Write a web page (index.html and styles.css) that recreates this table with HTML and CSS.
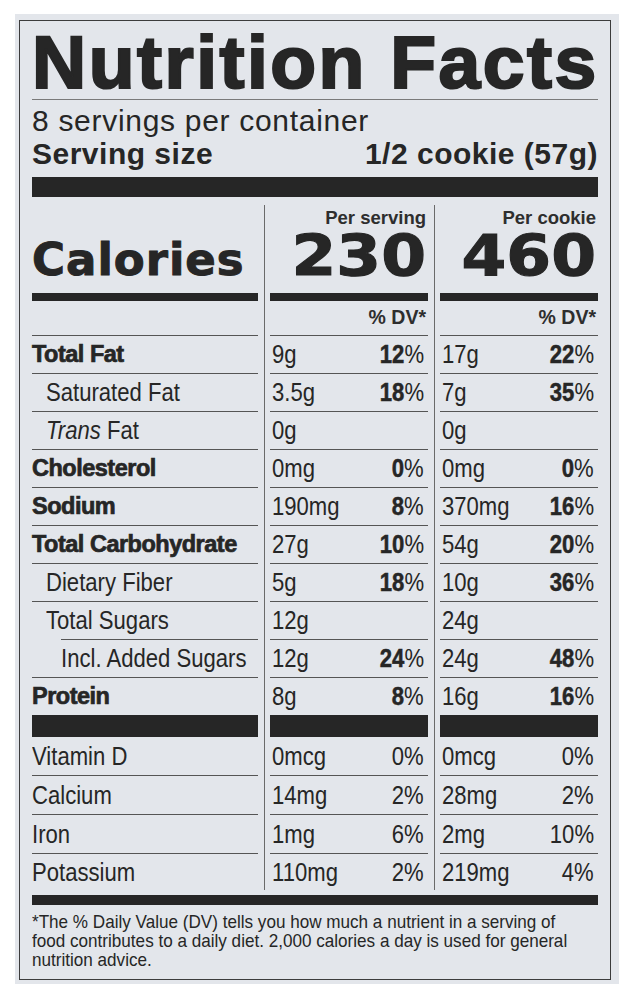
FILE: index.html
```html
<!DOCTYPE html>
<html lang="en">
<head>
<meta charset="utf-8">
<title>Nutrition Facts</title>
<link rel="stylesheet" href="styles.css">
</head>
<body>
<div class="label">
  <div class="panel">
    <h1 class="title">Nutrition Facts</h1>
    <div class="servings">8 servings per container</div>
    <div class="size"><span>Serving size</span><span>1/2 cookie (57g)</span></div>
    <div class="bar-thick"></div>

    <div class="grid">
      <div class="vline v1"></div>
      <div class="vline v2"></div>

      <div class="c1"></div>
      <div class="c2 head">Per serving</div>
      <div class="c3 head">Per cookie</div>

      <div class="c1 cal-label calbar">Calories</div>
      <div class="c2 cal-num calbar"><span class="num">230</span></div>
      <div class="c3 cal-num calbar"><span class="num">460</span></div>

      <div class="c1 rule"></div>
      <div class="c2 dv rule">% DV*</div>
      <div class="c3 dv rule">% DV*</div>

      <div class="c1 lab bold rule">Total Fat</div>
      <div class="c2 val rule"><span class="cx">9g</span><span class="cxr"><b>12</b>%</span></div>
      <div class="c3 val rule"><span class="cx">17g</span><span class="cxr"><b>22</b>%</span></div>

      <div class="c1 lab in1 rule"><span class="cx">Saturated Fat</span></div>
      <div class="c2 val rule"><span class="cx">3.5g</span><span class="cxr"><b>18</b>%</span></div>
      <div class="c3 val rule"><span class="cx">7g</span><span class="cxr"><b>35</b>%</span></div>

      <div class="c1 lab in1 rule"><span class="cx"><i>Trans</i> Fat</span></div>
      <div class="c2 val rule"><span class="cx">0g</span></div>
      <div class="c3 val rule"><span class="cx">0g</span></div>

      <div class="c1 lab bold rule">Cholesterol</div>
      <div class="c2 val rule"><span class="cx">0mg</span><span class="cxr"><b>0</b>%</span></div>
      <div class="c3 val rule"><span class="cx">0mg</span><span class="cxr"><b>0</b>%</span></div>

      <div class="c1 lab bold rule">Sodium</div>
      <div class="c2 val rule"><span class="cx">190mg</span><span class="cxr"><b>8</b>%</span></div>
      <div class="c3 val rule"><span class="cx">370mg</span><span class="cxr"><b>16</b>%</span></div>

      <div class="c1 lab bold rule">Total Carbohydrate</div>
      <div class="c2 val rule"><span class="cx">27g</span><span class="cxr"><b>10</b>%</span></div>
      <div class="c3 val rule"><span class="cx">54g</span><span class="cxr"><b>20</b>%</span></div>

      <div class="c1 lab in1 rule"><span class="cx">Dietary Fiber</span></div>
      <div class="c2 val rule"><span class="cx">5g</span><span class="cxr"><b>18</b>%</span></div>
      <div class="c3 val rule"><span class="cx">10g</span><span class="cxr"><b>36</b>%</span></div>

      <div class="c1 lab in1 rule-indent"><span class="cx">Total Sugars</span></div>
      <div class="c2 val rule"><span class="cx">12g</span></div>
      <div class="c3 val rule"><span class="cx">24g</span></div>

      <div class="c1 lab in2 rule"><span class="cx">Incl. Added Sugars</span></div>
      <div class="c2 val rule"><span class="cx">12g</span><span class="cxr"><b>24</b>%</span></div>
      <div class="c3 val rule"><span class="cx">24g</span><span class="cxr"><b>48</b>%</span></div>

      <div class="c1 lab bold">Protein</div>
      <div class="c2 val"><span class="cx">8g</span><span class="cxr"><b>8</b>%</span></div>
      <div class="c3 val"><span class="cx">16g</span><span class="cxr"><b>16</b>%</span></div>

      <div class="c1 blk"></div>
      <div class="c2 blk"></div>
      <div class="c3 blk"></div>

      <div class="c1 lab vit rule"><span class="cx">Vitamin D</span></div>
      <div class="c2 val vit rule"><span class="cx">0mcg</span><span class="cxr">0%</span></div>
      <div class="c3 val vit rule"><span class="cx">0mcg</span><span class="cxr">0%</span></div>

      <div class="c1 lab vit rule"><span class="cx">Calcium</span></div>
      <div class="c2 val vit rule"><span class="cx">14mg</span><span class="cxr">2%</span></div>
      <div class="c3 val vit rule"><span class="cx">28mg</span><span class="cxr">2%</span></div>

      <div class="c1 lab vit rule"><span class="cx">Iron</span></div>
      <div class="c2 val vit rule"><span class="cx">1mg</span><span class="cxr">6%</span></div>
      <div class="c3 val vit rule"><span class="cx">2mg</span><span class="cxr">10%</span></div>

      <div class="c1 lab vit last"><span class="cx">Potassium</span></div>
      <div class="c2 val vit last"><span class="cx">110mg</span><span class="cxr">2%</span></div>
      <div class="c3 val vit last"><span class="cx">219mg</span><span class="cxr">4%</span></div>
    </div>

    <div class="bar-bottom"></div>
    <p class="foot">*The % Daily Value (DV) tells you how much a nutrient in a serving of<br>food contributes to a daily diet. 2,000 calories a day is used for general<br>nutrition advice.</p>
  </div>
</div>
</body>
</html>
```

FILE: styles.css
```css
* { box-sizing: border-box; }

body {
  margin: 0;
  background: #ffffff;
  font-family: "Liberation Sans", Arial, sans-serif;
  color: #262626;
}

.label {
  margin: 14px 0 0 15px;
  width: 604px;
  height: 970px;
  padding: 6px 8px 4px 4px;
  background: #e3e6eb;
  display: flex;
  flex-direction: column;
}

.panel {
  flex: 1;
  border: 1px solid #3c3c3c;
  padding: 5px 12px 0;
}

.title {
  margin: 0;
  font-size: 75px;
  line-height: 73px;
  font-weight: 700;
  letter-spacing: 2.5px;
  -webkit-text-stroke: 2.2px #262626;
  border-bottom: 1px solid #7a7a7a;
  white-space: nowrap;
}

.servings {
  margin-top: 4px;
  font-size: 30px;
  line-height: 33px;
  letter-spacing: 0.7px;
  white-space: nowrap;
}

.size {
  display: flex;
  justify-content: space-between;
  font-size: 30px;
  line-height: 33px;
  font-weight: 700;
  letter-spacing: 0.5px;
  white-space: nowrap;
}

.bar-thick {
  margin-top: 7px;
  height: 20px;
  background: #262626;
}

.grid {
  margin-top: 8px;
  display: grid;
  grid-template-columns: 226px 12px 158px 12px 158px;
  grid-template-rows: 23px 73px 35px repeat(9, 38px) 37px 22px 39px 39px 39px 36px;
}

.vline {
  grid-row: 1 / -1;
  width: 1px;
  margin-left: 6px;
  background: #6a6a6a;
}
.v1 { grid-column: 2; }
.v2 { grid-column: 4; }

.c1 { grid-column: 1; }
.c2 { grid-column: 3; }
.c3 { grid-column: 5; }

.head {
  text-align: right;
  font-size: 18.5px;
  line-height: 23px;
  padding-top: 1px;
  font-weight: 700;
  padding-right: 2px;
  color: #2e2e2e;
}

.cal-label {
  font-family: "DejaVu Sans", sans-serif;
  font-weight: 700;
  font-size: 45px;
  line-height: 56px;
  padding-top: 4px;
  letter-spacing: 1px;
  -webkit-text-stroke: 1px #262626;
}

.cal-num {
  text-align: right;
  font-family: "DejaVu Sans", sans-serif;
  font-weight: 700;
  font-size: 57px;
  line-height: 56px;
  padding-right: 2px;
}

.num {
  display: inline-block;
  transform: scaleX(1.13);
  transform-origin: right center;
  -webkit-text-stroke: 1.1px #262626;
}

.calbar { border-bottom: 8px solid #262626; }

.dv {
  text-align: right;
  font-size: 19.5px;
  line-height: 33px;
  padding-right: 2px;
  font-weight: 700;
  color: #2e2e2e;
}

.rule { border-bottom: 1px solid #555555; }
.rule-indent {
  background: linear-gradient(#555555, #555555) no-repeat 29px 100% / calc(100% - 29px) 1px;
}

.lab {
  font-size: 26px;
  line-height: 37px;
  white-space: nowrap;
}
.lab.bold {
  font-weight: 700;
  font-size: 23.5px;
  letter-spacing: -0.5px;
  -webkit-text-stroke: 0.7px #262626;
}
.in1 { padding-left: 14px; }
.in2 { padding-left: 29px; }

.cx, .cxr {
  display: inline-block;
  transform: scaleX(0.85);
  transform-origin: left center;
}
.cxr { transform-origin: right center; }

.val {
  display: flex;
  justify-content: space-between;
  font-size: 26px;
  line-height: 37px;
  padding: 0 4px 0 2px;
  white-space: nowrap;
}
.val b {
  font-weight: 700;
  -webkit-text-stroke: 0.5px #262626;
}

.vit { line-height: 38px; }
.last { line-height: 36px; }

.blk { background: #262626; }

.bar-bottom {
  margin-top: 5px;
  height: 10px;
  background: #262626;
}

.foot {
  margin: 7px 0 0;
  font-size: 19px;
  line-height: 19px;
  white-space: nowrap;
  transform: scaleX(0.9);
  transform-origin: left top;
}
```
